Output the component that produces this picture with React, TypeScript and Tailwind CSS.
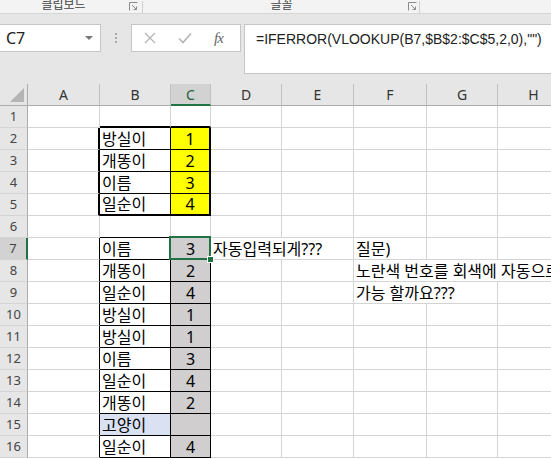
import type { ReactNode } from "react";

const font = "font-['Noto_Sans','Noto_Sans_CJK_KR',sans-serif]";

const cols = [
  { key: "A", w: 72 },
  { key: "B", w: 71 },
  { key: "C", w: 40 },
  { key: "D", w: 71 },
  { key: "E", w: 72 },
  { key: "F", w: 73 },
  { key: "G", w: 71 },
  { key: "H", w: 72 },
];

const grid = "border-[#d4d4d4]";

function Cell({
  w,
  className = "",
  children,
}: {
  w: number;
  className?: string;
  children?: ReactNode;
}) {
  return (
    <div
      className={`relative h-full shrink-0 flex items-end pb-[0px] px-[2px] whitespace-nowrap overflow-hidden text-[16px] leading-[20px] text-black border-r border-b ${className}`}
      style={{ width: w }}
    >
      {children}
    </div>
  );
}

function Launcher() {
  return (
    <svg width="9" height="9" viewBox="0 0 9 9" className="text-[#8a8a8a]">
      <path d="M0.5 8.5V0.5H8.5" fill="none" stroke="currentColor" />
      <path d="M3 3L7.5 7.5M4.5 7.5H7.5V4.5" fill="none" stroke="currentColor" />
    </svg>
  );
}

const lookupRows: [string, string][] = [
  ["이름", "3"],
  ["개똥이", "2"],
  ["일순이", "4"],
  ["방실이", "1"],
  ["방실이", "1"],
  ["이름", "3"],
  ["일순이", "4"],
  ["개똥이", "2"],
  ["고양이", ""],
  ["일순이", "4"],
];

const tableRows: [string, string][] = [
  ["방실이", "1"],
  ["개똥이", "2"],
  ["이름", "3"],
  ["일순이", "4"],
];

function RowHead({ n, active }: { n: number; active?: boolean }) {
  return (
    <div
      className={`w-[28px] h-full shrink-0 flex items-center justify-center text-[13px] text-[#444] border-b border-[#d4d4d4] ${
        active ? "bg-[#d2d2d2] border-r-2 border-r-[#217346] text-[#1e5e3b]" : "bg-[#e6e6e6] border-r border-r-[#ababab]"
      }`}
    >
      {n}
    </div>
  );
}

function Row({ children }: { children: ReactNode }) {
  return <div className="flex h-[22px]">{children}</div>;
}

export default function App() {
  return (
    <div className={`w-[551px] h-[459px] overflow-hidden bg-white ${font}`}>
      {/* ribbon remnant */}
      <div className="h-[14px] bg-[#f3f3f3] border-b border-[#d6d6d6] flex items-end text-[12px] text-[#444] leading-none overflow-hidden">
        <div className="w-[143px] flex items-end shrink-0 border-r border-[#cfcfcf] h-[12px]">
          <span className="flex-1 text-center -translate-y-[2px] -ml-[2px]">클립보드</span>
          <span className="mr-[4px] mb-[2px]"><Launcher /></span>
        </div>
        <div className="w-[277px] flex items-end shrink-0 border-r border-[#cfcfcf] h-[12px]">
          <span className="flex-1 text-center -translate-y-[2px] pl-[12px]">글꼴</span>
          <span className="mr-[2px] mb-[2px]"><Launcher /></span>
        </div>
      </div>

      {/* formula bar */}
      <div className="h-[70px] bg-[#e6e6e6] flex items-start pt-[10px]">
        <div className="w-[101px] h-[28px] shrink-0 bg-white border border-[#c6c6c6] border-l-0 flex items-center justify-between pl-[6px] pr-[7px]">
          <span className="text-[16px] text-[#222]">C7</span>
          <span className="w-0 h-0 border-l-[4px] border-r-[4px] border-t-[4px] border-l-transparent border-r-transparent border-t-[#777]" />
        </div>
        <div className="w-[30px] h-[28px] shrink-0 flex flex-col items-center justify-center gap-[2px]">
          <span className="w-[2px] h-[2px] bg-[#a8a8a8]" />
          <span className="w-[2px] h-[2px] bg-[#a8a8a8]" />
          <span className="w-[2px] h-[2px] bg-[#a8a8a8]" />
        </div>
        <div className="w-[110px] h-[28px] shrink-0 bg-white border border-[#c6c6c6] flex items-center pl-[12px]">
          <svg width="12" height="12" viewBox="0 0 12 12">
            <path d="M1 1L11 11M11 1L1 11" stroke="#b5b5b5" strokeWidth="1.3" />
          </svg>
          <svg width="14" height="12" viewBox="0 0 14 12" className="ml-[22px]">
            <path d="M1 6.5L5 10.5L13 1.5" fill="none" stroke="#b5b5b5" strokeWidth="1.6" />
          </svg>
          <span className="ml-[22px] text-[15px] italic text-[#666] font-['Liberation_Serif',serif] tracking-[-1px]">fx</span>
        </div>
        <div className="ml-[3px] flex-1 h-[50px] bg-white border border-[#c6c6c6] border-r-0 pl-[11px] pt-[4px] text-[14px] text-[#222] whitespace-nowrap font-['Liberation_Sans',sans-serif]">
          =IFERROR(VLOOKUP(B7,$B$2:$C$5,2,0),"")
        </div>
      </div>

      {/* column headers */}
      <div className="flex h-[22px] bg-[#e6e6e6]">
        <div className="w-[28px] h-full shrink-0 border-r border-b border-[#ababab] flex items-end justify-end p-[3px]">
          <div className="w-0 h-0 border-l-[14px] border-t-[14px] border-l-transparent border-t-transparent border-r-0 border-b-0 relative">
            <span className="absolute -left-[14px] -top-[14px] w-0 h-0 border-l-[14px] border-b-[14px] border-l-transparent border-b-[#b4b4b4]" />
          </div>
        </div>
        {cols.map((c) => (
          <div
            key={c.key}
            className={`h-full shrink-0 flex items-center justify-center text-[14px] border-r border-r-[#c0c0c0] ${
              c.key === "C"
                ? "bg-[#d2d2d2] border-b-2 border-b-[#217346] text-[#1e5e3b]"
                : "border-b border-b-[#ababab] text-[#333]"
            }`}
            style={{ width: c.w }}
          >
            {c.key}
          </div>
        ))}
      </div>

      {/* row 1 */}
      <Row>
        <RowHead n={1} />
        <Cell w={72} className={grid} />
        <Cell w={71} className={`${grid} border-b-2 border-b-black`} />
        <Cell w={40} className={`${grid} border-b-2 border-b-black`} />
        <Cell w={71} className={grid} />
        <Cell w={72} className={grid} />
        <Cell w={73} className={grid} />
        <Cell w={71} className={grid} />
        <Cell w={72} className={grid} />
      </Row>

      {/* rows 2-5: lookup table */}
      {tableRows.map(([name, num], i) => (
        <Row key={name}>
          <RowHead n={i + 2} />
          <Cell w={72} className={`${grid} border-r-2 border-r-black`} />
          <Cell w={71} className={`border-r-black ${i === 3 ? "border-b-2" : ""} border-b-black`}>
            {name}
          </Cell>
          <Cell
            w={40}
            className={`bg-[#ffff00] border-r-2 border-r-black ${i === 3 ? "border-b-2" : ""} border-b-black justify-center`}
          >
            {num}
          </Cell>
          <Cell w={71} className={grid} />
          <Cell w={72} className={grid} />
          <Cell w={73} className={grid} />
          <Cell w={71} className={grid} />
          <Cell w={72} className={grid} />
        </Row>
      ))}

      {/* row 6 */}
      <Row>
        <RowHead n={6} />
        <Cell w={72} className={grid} />
        <Cell w={71} className={`${grid} border-b-black`} />
        <Cell w={40} className={`${grid} border-b-black`} />
        <Cell w={71} className={grid} />
        <Cell w={72} className={grid} />
        <Cell w={73} className={grid} />
        <Cell w={71} className={grid} />
        <Cell w={72} className={grid} />
      </Row>

      {/* rows 7-16 */}
      {lookupRows.map(([name, num], i) => {
        const n = i + 7;
        return (
          <Row key={n}>
            <RowHead n={n} active={n === 7} />
            <Cell w={72} className={`${grid} border-r-black`} />
            <Cell w={71} className={`border-black ${name === "고양이" ? "bg-[#d9e1f2]" : ""}`}>
              {name}
            </Cell>
            <Cell w={40} className="bg-[#d0cece] border-black justify-center !overflow-visible">
              {num}
              {n === 7 && (
                <>
                  <span className="absolute -left-[2px] -top-[2px] w-[42px] h-[24px] border-2 border-[#217346]" />
                  <span className="absolute -right-[4px] -bottom-[4px] w-[7px] h-[7px] bg-[#217346] border border-white z-10" />
                </>
              )}
            </Cell>
            {n === 7 ? (
              <>
                <Cell w={143} className={grid}>자동입력되게???</Cell>
                <Cell w={73} className={grid}>질문)</Cell>
                <Cell w={71} className={grid} />
                <Cell w={72} className={grid} />
              </>
            ) : n === 8 ? (
              <>
                <Cell w={71} className={grid} />
                <Cell w={72} className={grid} />
                <Cell w={216} className={grid}>노란색 번호를 회색에 자동으로 입력</Cell>
              </>
            ) : n === 9 ? (
              <>
                <Cell w={71} className={grid} />
                <Cell w={72} className={grid} />
                <Cell w={144} className={grid}>가능 할까요???</Cell>
                <Cell w={72} className={grid} />
              </>
            ) : (
              <>
                <Cell w={71} className={grid} />
                <Cell w={72} className={grid} />
                <Cell w={73} className={grid} />
                <Cell w={71} className={grid} />
                <Cell w={72} className={grid} />
              </>
            )}
          </Row>
        );
      })}
    </div>
  );
}
